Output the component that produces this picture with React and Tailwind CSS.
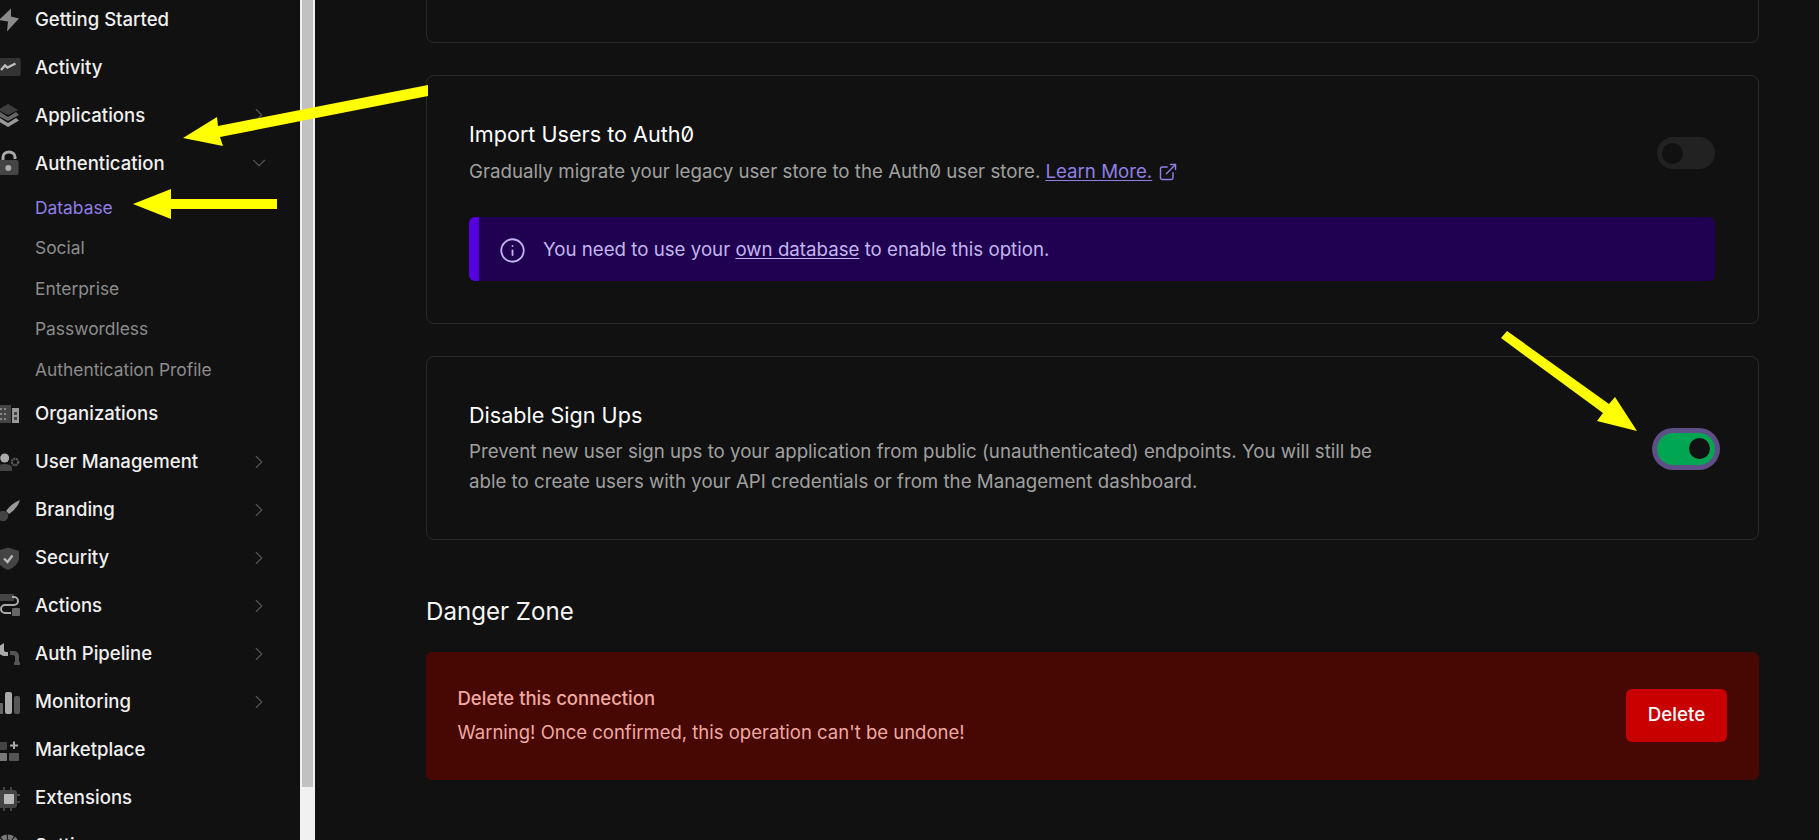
import React from "react";
import { ChevronRight, ChevronDown, Info, ExternalLink } from "lucide-react";

const Bolt = () => (<path d="M15 1.5 L3 13 L12 14.5 L11 24.5 L23 11.5 L15 9.5 Z" fill="#8a8a8a" />);
const Activity = () => (<><rect x="0" y="3" width="24.7" height="18" rx="2" fill="#333" /><path d="M5 15 L9 10.5 L11.5 12.5 L19.5 8.5" fill="none" stroke="#bbb" strokeWidth="2.4" /></>);
const Layers = () => (<><path d="M12 1 L22 7 L12 12 L2 7Z" fill="#3d3d3d" /><path d="M4 9 L12 14 L20 9 L23 12 L12 18 L1 12Z" fill="#666" /><path d="M4 15 L12 20 L20 15 L23 17.5 L12 24 L1 17.5Z" fill="#999" /></>);
const Lock = () => (<><rect x="0" y="9" width="22.6" height="15" rx="2" fill="#444" /><path d="M7 9 V6 a6 5 0 0 1 12 0 V8" fill="none" stroke="#aaa" strokeWidth="3" /><circle cx="12.3" cy="17" r="3" fill="#aaa" /></>);
const Org = () => (<><rect x="0" y="3" width="15" height="18" fill="#444" /><rect x="16" y="6" width="7" height="15" fill="#999" /><g fill="#888"><rect x="4" y="6" width="2" height="2" /><rect x="8" y="6" width="2" height="2" /><rect x="4" y="11" width="2" height="2" /><rect x="8" y="11" width="2" height="2" /><rect x="4" y="16" width="2" height="2" /><rect x="8" y="16" width="2" height="2" /></g><rect x="18" y="10" width="3" height="3" fill="#444" /><rect x="18" y="15" width="3" height="3" fill="#444" /></>);
const Users = () => (<><circle cx="8.7" cy="8" r="4.5" fill="#aaa" /><path d="M1 21 V18 Q2 14 8 14 Q16 14 16 18 V21Z" fill="#444" /><circle cx="19" cy="12" r="3.2" fill="none" stroke="#555" strokeWidth="2.4" strokeDasharray="2 0.6" /></>);
const Brush = () => (<><path d="M24 2 Q22 10 13 16 L10 13 Q16 5 24 2Z" fill="#999" /><circle cx="7" cy="18" r="5.2" fill="#444" /></>);
const Shield = () => (<><path d="M12 1.5 L23 5 V13 Q22 20 12 24 Q2 20 1 13 V5Z" fill="#444" /><path d="M8 12.5 L11.5 16 L16.5 9.5" fill="none" stroke="#bbb" strokeWidth="2.4" /></>);
const Actions = () => (<><rect x="2" y="0" width="16" height="7" rx="1" fill="#444" /><path d="M16 3 H18 a3.5 3.5 0 0 1 0 8 H9 a3.5 3.5 0 0 0 0 8 H15" fill="none" stroke="#aaa" strokeWidth="2" /><rect x="16" y="14" width="8" height="8" rx="1" fill="#666" /></>);
const Pipe = () => (<><path d="M8 1 V8 a2 2 0 0 0 2 2 H12 V14 H8 a5 5 0 0 1 -5 -5 V4" fill="#aaa" /><path d="M14 9 H18 a5 5 0 0 1 5 5 V20 H19 V15 a2 2 0 0 0 -2 -2 H14Z" fill="#555" /><rect x="18" y="20" width="6" height="3" fill="#555" /></>);
const Bars = () => (<><rect x="1" y="13" width="6" height="11" rx="1" fill="#666" /><rect x="9" y="2" width="7" height="22" rx="2" fill="#aaa" /><rect x="18" y="6" width="6" height="18" rx="2" fill="#555" /></>);
const Market = () => (<><rect x="2" y="4" width="9" height="8" rx="1" fill="#444" /><rect x="2" y="15" width="9" height="8" rx="1" fill="#777" /><rect x="13" y="15" width="10" height="8" rx="1" fill="#555" /><path d="M18 3.5 V11 M14 7.5 H22" stroke="#aaa" strokeWidth="2" /></>);
const Chip = () => (<><rect x="2" y="4" width="19" height="18" rx="3" fill="#444" /><path d="M8 1 V25 M15 1 V25 M0 9 H24 M0 16 H24" stroke="#444" strokeWidth="2" /><rect x="8" y="8" width="10" height="10" rx="1" fill="#bbb" /></>);
const Gear = () => (<circle cx="12" cy="12" r="9" fill="none" stroke="#777" strokeWidth="5" strokeDasharray="5 1" />);

const Row = ({ icon, label, chevron }) => (
  <div className="relative flex h-12 items-center">
    <svg viewBox="0 0 24 24" className="h-6 w-6 shrink-0 -ml-1 overflow-visible">{icon}</svg>
    <span className="ml-[15px] text-[18.56px] font-medium leading-none text-[#f0f0f0]">{label}</span>
    {chevron === "right" && <ChevronRight className="absolute left-[248px] h-[22px] w-[22px] text-[#555]" strokeWidth={1.25} />}
    {chevron === "down" && <ChevronDown className="absolute left-[248px] h-[22px] w-[22px] text-[#555]" strokeWidth={1.25} />}
  </div>
);

const Sub = ({ label, active }) => (
  <div className={`flex h-[40.5px] items-center pl-[35px] pt-px text-[17.4px] ${active ? "text-[#8f7fe6]" : "text-[#8c8c8c]"}`}>{label}</div>
);

const Toggle = ({ on }) => (
  <div className={`flex h-8 w-[58px] shrink-0 items-center rounded-full p-[5px] ${on ? "justify-end bg-[#00a651] ring-[5px] ring-[#5e5087]" : "bg-[#222]"}`}>
    <div className="h-[21px] w-[21px] rounded-full bg-[#111]" />
  </div>
);

export default function App() {
  return (
    <div className="relative flex h-screen overflow-hidden bg-[#111] font-['Inter',sans-serif] [font-feature-settings:'zero']">
      <aside className="h-full w-[300px] shrink-0 overflow-hidden bg-[#111]">
        <div className="-mt-[5px]">
          <Row icon={<Bolt />} label="Getting Started" />
          <Row icon={<Activity />} label="Activity" />
          <Row icon={<Layers />} label="Applications" chevron="right" />
          <Row icon={<Lock />} label="Authentication" chevron="down" />
          <Sub label="Database" active />
          <Sub label="Social" />
          <Sub label="Enterprise" />
          <Sub label="Passwordless" />
          <Sub label="Authentication Profile" />
          <Row icon={<Org />} label="Organizations" />
          <Row icon={<Users />} label="User Management" chevron="right" />
          <Row icon={<Brush />} label="Branding" chevron="right" />
          <Row icon={<Shield />} label="Security" chevron="right" />
          <Row icon={<Actions />} label="Actions" chevron="right" />
          <Row icon={<Pipe />} label="Auth Pipeline" chevron="right" />
          <Row icon={<Bars />} label="Monitoring" chevron="right" />
          <Row icon={<Market />} label="Marketplace" />
          <Row icon={<Chip />} label="Extensions" />
          <Row icon={<Gear />} label="Settings" />
        </div>
      </aside>
      <div className="h-full w-[15px] shrink-0 bg-[#f1f1f1] px-[2px]">
        <div className="h-[787px] w-[11px] bg-[#c1c1c1]" />
      </div>
      <main className="h-full min-w-0 flex-1 overflow-hidden pl-[111px] pr-[60px]">
        <div className="-mt-[100px] h-[143px] rounded-lg border border-[#2a2a2a]" />
        <section className="mt-8 rounded-lg border border-[#2a2a2a] pb-[42px] pl-[42px] pr-[43px] pt-[43px]">
          <div className="flex items-center justify-between">
            <div>
              <h3 className="text-[21.6px] font-normal leading-[30px] text-white">Import Users to Auth0</h3>
              <p className="mt-2 flex items-center text-[18.7px] leading-[30px] text-[#a0a0a0]">
                Gradually migrate your legacy user store to the Auth0 user store.
                <a className="ml-[5px] text-[#8f7fe6] underline underline-offset-2">Learn More.</a>
                <ExternalLink className="ml-[6px] h-5 w-5 text-[#8f7fe6]" strokeWidth={1.75} />
              </p>
            </div>
            <Toggle />
          </div>
          <div className="mt-[30px] flex h-16 items-center rounded-md border-l-[10px] border-[#5600e0] bg-[#200050] pl-5 pt-[3px] text-[18.7px] text-[#c3b6ef]">
            <Info className="h-[27px] w-[27px] shrink-0" strokeWidth={1.6} />
            <span className="ml-[17px]">You need to use your <a className="underline underline-offset-2">own database</a> to enable this option.</span>
          </div>
        </section>
        <section className="mt-8 flex items-center justify-between rounded-lg border border-[#2a2a2a] pb-[42px] pl-[42px] pr-[43px] pt-[43px]">
          <div className="max-w-[920px]">
            <h3 className="text-[21.6px] font-normal leading-[30px] text-white">Disable Sign Ups</h3>
            <p className="mt-[7px] text-[18.7px] leading-[30px] text-[#a0a0a0]">Prevent new user sign ups to your application from public (unauthenticated) endpoints. You will still be able to create users with your API credentials or from the Management dashboard.</p>
          </div>
          <Toggle on />
        </section>
        <h2 className="mt-[54px] text-[24.1px] font-normal leading-9 text-[#f5f5f5]">Danger Zone</h2>
        <section className="mt-[22px] flex h-32 items-center justify-between rounded-md bg-[#470804] pb-[2px] pl-[31.5px] pr-8">
          <div className="text-[18.5px] text-[#f0a9a2]">
            <p className="font-medium leading-[34px]">Delete this connection</p>
            <p className="leading-[34px]">Warning! Once confirmed, this operation can't be undone!</p>
          </div>
          <button className="h-[53px] w-[101px] rounded-md bg-[#c80000] text-[18.7px] font-medium text-white">Delete</button>
        </section>
      </main>
      <svg className="pointer-events-none absolute left-0 top-0 h-[840px] w-[1819px]" viewBox="0 0 1819 840">
        <g fill="#ffff00">
          <polygon points="428,85 218,126 217,117 183,138 223,146 220,137 428,96" />
          <polygon points="277,199 171,199 171,189 133,204 171,219 171,209 277,209" />
          <polygon points="1507,331 1609,404 1615,397 1637,431 1597,421 1603,413 1501,338" />
        </g>
      </svg>
    </div>
  );
}
